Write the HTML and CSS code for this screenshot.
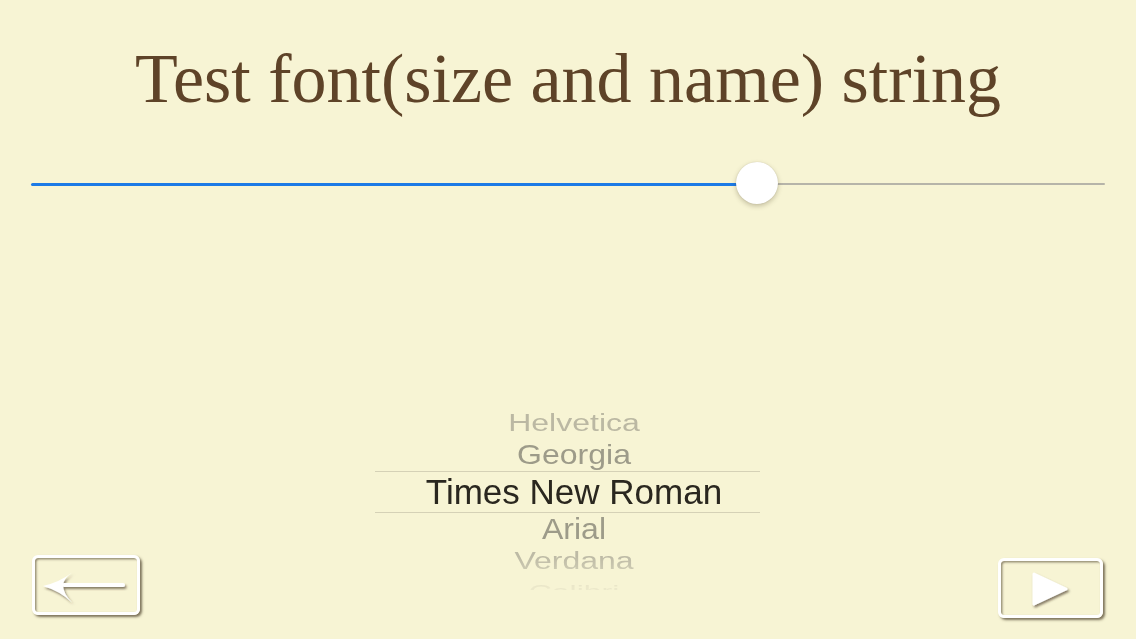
FILE: index.html
```html
<!DOCTYPE html>
<html lang="en">
<head>
<meta charset="utf-8">
<title>Font test</title>
<link rel="stylesheet" href="styles.css">
</head>
<body>
<main class="screen">
  <h1 class="title">Test font(size and name) string</h1>

  <div class="slider">
    <div class="track-fill" style="width: 67.6%"></div>
    <div class="track-rest"></div>
    <div class="thumb" style="left: 67.6%"></div>
  </div>

  <div class="spacer"></div>

  <div class="bottom">
    <button class="btn btn-back" type="button" aria-label="Back">
      <svg class="icon" width="108" height="60" viewBox="0 0 108 60">
        <defs>
          <filter id="sh1" x="-20%" y="-20%" width="150%" height="160%">
            <feDropShadow dx="1.5" dy="2" stdDeviation="1.2" flood-color="#3a2e1a" flood-opacity="0.6"/>
          </filter>
        </defs>
        <g filter="url(#sh1)" fill="#fff">
          <rect x="30" y="28" width="63" height="4" rx="2"/>
          <path d="M11,31 Q28,27 40,17.5 Q31,24 31,30.5 Q31,38 40,47.5 Q28,36 11,31 Z"/>
        </g>
      </svg>
    </button>

    <div class="picker">
      <div class="row r-far">Helvetica</div>
      <div class="row r-near">Georgia</div>
      <div class="row r-sel">Times New Roman</div>
      <div class="row r-near2">Arial</div>
      <div class="row r-far2">Verdana</div>
      <div class="row r-edge">Calibri</div>
    </div>

    <button class="btn btn-play" type="button" aria-label="Play">
      <svg class="icon" width="105" height="60" viewBox="0 0 105 60">
        <defs>
          <filter id="sh2" x="-30%" y="-30%" width="170%" height="170%">
            <feDropShadow dx="1.5" dy="2" stdDeviation="1.2" flood-color="#3a2e1a" flood-opacity="0.6"/>
          </filter>
        </defs>
        <path filter="url(#sh2)" fill="#fff" stroke="#fff" stroke-width="3" stroke-linejoin="round"
              d="M36,16 L68,31 L36,46 Z"/>
      </svg>
    </button>
  </div>
</main>
</body>
</html>
```

FILE: styles.css
```css
* { box-sizing: border-box; }

html, body {
  margin: 0;
  padding: 0;
  height: 100%;
  background: #f7f4d4;
}

.screen {
  height: 639px;
  display: flex;
  flex-direction: column;
  overflow: hidden;
}

.title {
  margin: 0;
  padding-top: 39px;
  font-family: "Liberation Serif", "Times New Roman", serif;
  font-weight: normal;
  font-size: 70px;
  line-height: 80px;
  color: #5e4328;
  text-align: center;
  white-space: nowrap;
}

.slider {
  position: relative;
  margin: 44px 31px 0 31px;
  height: 42px;
  display: flex;
  align-items: center;
}

.track-fill {
  height: 3px;
  background: #1c7ae6;
  border-radius: 2px 0 0 2px;
}

.track-rest {
  flex: 1;
  height: 2px;
  background: #b6b4a9;
  border-radius: 0 1px 1px 0;
}

.thumb {
  position: absolute;
  top: -1px;
  width: 42px;
  height: 42px;
  margin-left: -21px;
  border-radius: 50%;
  background: #fff;
  box-shadow: 0 2px 5px rgba(60, 50, 20, 0.28), 0 0 1px rgba(60, 50, 20, 0.2);
}

.spacer { flex: 1; }

.bottom {
  display: grid;
  grid-template-columns: 1fr 385px 1fr;
  align-items: end;
  padding: 0 33px 21px 32px;
}

.btn {
  padding: 0;
  margin: 0;
  background: transparent;
  border: 3px solid #fff;
  border-radius: 6px;
  box-shadow: 2px 2px 2.5px rgba(58, 46, 26, 0.65),
              inset 1.5px 1.5px 2px rgba(58, 46, 26, 0.5);
  position: relative;
  display: flex;
  align-items: center;
  justify-content: center;
  overflow: visible;
}

.btn .icon {
  position: absolute;
  left: -3px;
  top: -3px;
}

.btn-back {
  justify-self: start;
  width: 108px;
  height: 60px;
  margin-bottom: 3px;
}

.btn-play {
  justify-self: end;
  width: 105px;
  height: 60px;
}

.picker {
  height: 185px;
  overflow: hidden;
  font-family: "Liberation Sans", Arial, sans-serif;
  text-align: center;
  margin-bottom: 28px;
  -webkit-mask-image: linear-gradient(to bottom, #000 0%, #000 82%, rgba(0,0,0,0.3) 100%);
  mask-image: linear-gradient(to bottom, #000 0%, #000 82%, rgba(0,0,0,0.3) 100%);
}

.row {
  white-space: nowrap;
  font-size: 32px;
  padding-left: 13px;
}

.r-far {
  margin-top: 2px;
  height: 32px;
  line-height: 32px;
  color: #bbb8a3;
  transform: scaleY(0.72);
}

.r-near {
  height: 32px;
  line-height: 32px;
  color: #9d9b89;
  transform: scaleY(0.86);
}

.r-sel {
  height: 42px;
  line-height: 40px;
  font-size: 35px;
  color: #2a271f;
  border-top: 1px solid #d5d1b6;
  border-bottom: 1px solid #d5d1b6;
}

.r-near2 {
  height: 32px;
  line-height: 32px;
  color: #9d9b89;
  transform: scaleY(0.95);
}

.r-far2 {
  height: 33px;
  line-height: 33px;
  color: #bdbaa5;
  transform: scaleY(0.72);
}

.r-edge {
  height: 27px;
  line-height: 29px;
  color: #d6d2b8;
  transform: scaleY(0.55);
}
```
